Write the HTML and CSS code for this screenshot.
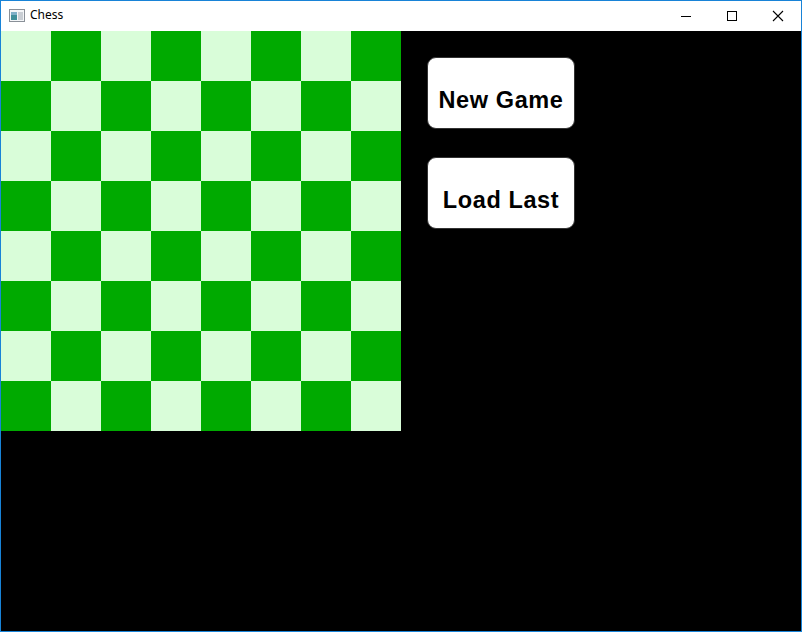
FILE: index.html
```html
<!DOCTYPE html>
<html>
<head>
<meta charset="utf-8">
<link rel="stylesheet" href="styles.css">
</head>
<body>
<div class="window">
  <div class="titlebar">
    <svg class="app-icon" width="16" height="14" viewBox="0 0 16 14">
      <rect x="0.5" y="0.5" width="15" height="12" fill="#f4f6f8" stroke="#8a9098"/>
      <rect x="2" y="3" width="6" height="8" fill="#3f8f9a"/>
      <rect x="2" y="3" width="6" height="3" fill="#7fb0c8"/>
      <rect x="9" y="3" width="5" height="8" fill="#c9ced4"/>
    </svg>
    <span class="title">Chess</span>
    <div class="controls">
      <div class="ctl"><svg width="12" height="12" viewBox="0 0 12 12"><line x1="1" y1="6.5" x2="11" y2="6.5" stroke="#000" stroke-width="1"/></svg></div>
      <div class="ctl"><svg width="12" height="12" viewBox="0 0 12 12"><rect x="1.5" y="1.5" width="9" height="9" fill="none" stroke="#000" stroke-width="1"/></svg></div>
      <div class="ctl"><svg width="12" height="12" viewBox="0 0 12 12"><path d="M1 1 L11 11 M11 1 L1 11" stroke="#000" stroke-width="1.1"/></svg></div>
    </div>
  </div>
  <div class="content">
    <div class="board" id="board"></div>
    <div class="panel">
      <button class="btn">New Game</button>
      <button class="btn">Load Last</button>
    </div>
  </div>
</div>
<script>
  var b = document.getElementById('board');
  for (var r = 0; r < 8; r++) {
    for (var c = 0; c < 8; c++) {
      var d = document.createElement('div');
      d.className = 'sq ' + ((r + c) % 2 === 0 ? 'light' : 'dark');
      b.appendChild(d);
    }
  }
</script>
</body>
</html>
```

FILE: styles.css
```css
html, body {
  margin: 0;
  padding: 0;
  background: #fff;
}
.window {
  width: 802px;
  height: 632px;
  box-sizing: border-box;
  border: 1px solid #1883d7;
  display: flex;
  flex-direction: column;
  background: #000;
  overflow: hidden;
}
.titlebar {
  height: 30px;
  background: #fff;
  display: flex;
  align-items: center;
  flex-shrink: 0;
  font-family: "Noto Sans", "DejaVu Sans", sans-serif;
  font-size: 12px;
  color: #000;
}
.app-icon {
  margin-left: 8px;
  margin-right: 5px;
}
.title {
  line-height: 1;
  margin-top: -2px;
}
.controls {
  margin-left: auto;
  display: flex;
  height: 30px;
}
.ctl {
  width: 46px;
  height: 30px;
  display: flex;
  align-items: center;
  justify-content: center;
}
.content {
  flex: 1;
  display: flex;
  align-items: flex-start;
  background: #000;
}
.board {
  width: 400px;
  height: 400px;
  display: grid;
  grid-template-columns: repeat(8, 50px);
  grid-template-rows: repeat(8, 50px);
}
.sq.light { background: #d9fdd9; }
.sq.dark { background: #00aa00; }
.panel {
  display: flex;
  flex-direction: column;
  gap: 28px;
  padding-left: 26px;
  padding-top: 26px;
}
.btn {
  width: 148px;
  height: 72px;
  background: #fff;
  border: 1px solid #333;
  border-radius: 9px;
  font-family: "Liberation Sans", Arial, sans-serif;
  font-weight: bold;
  font-size: 23.5px;
  letter-spacing: 0.6px;
  color: #000;
  margin: 0;
  padding: 14px 0 0 0;
}
```
